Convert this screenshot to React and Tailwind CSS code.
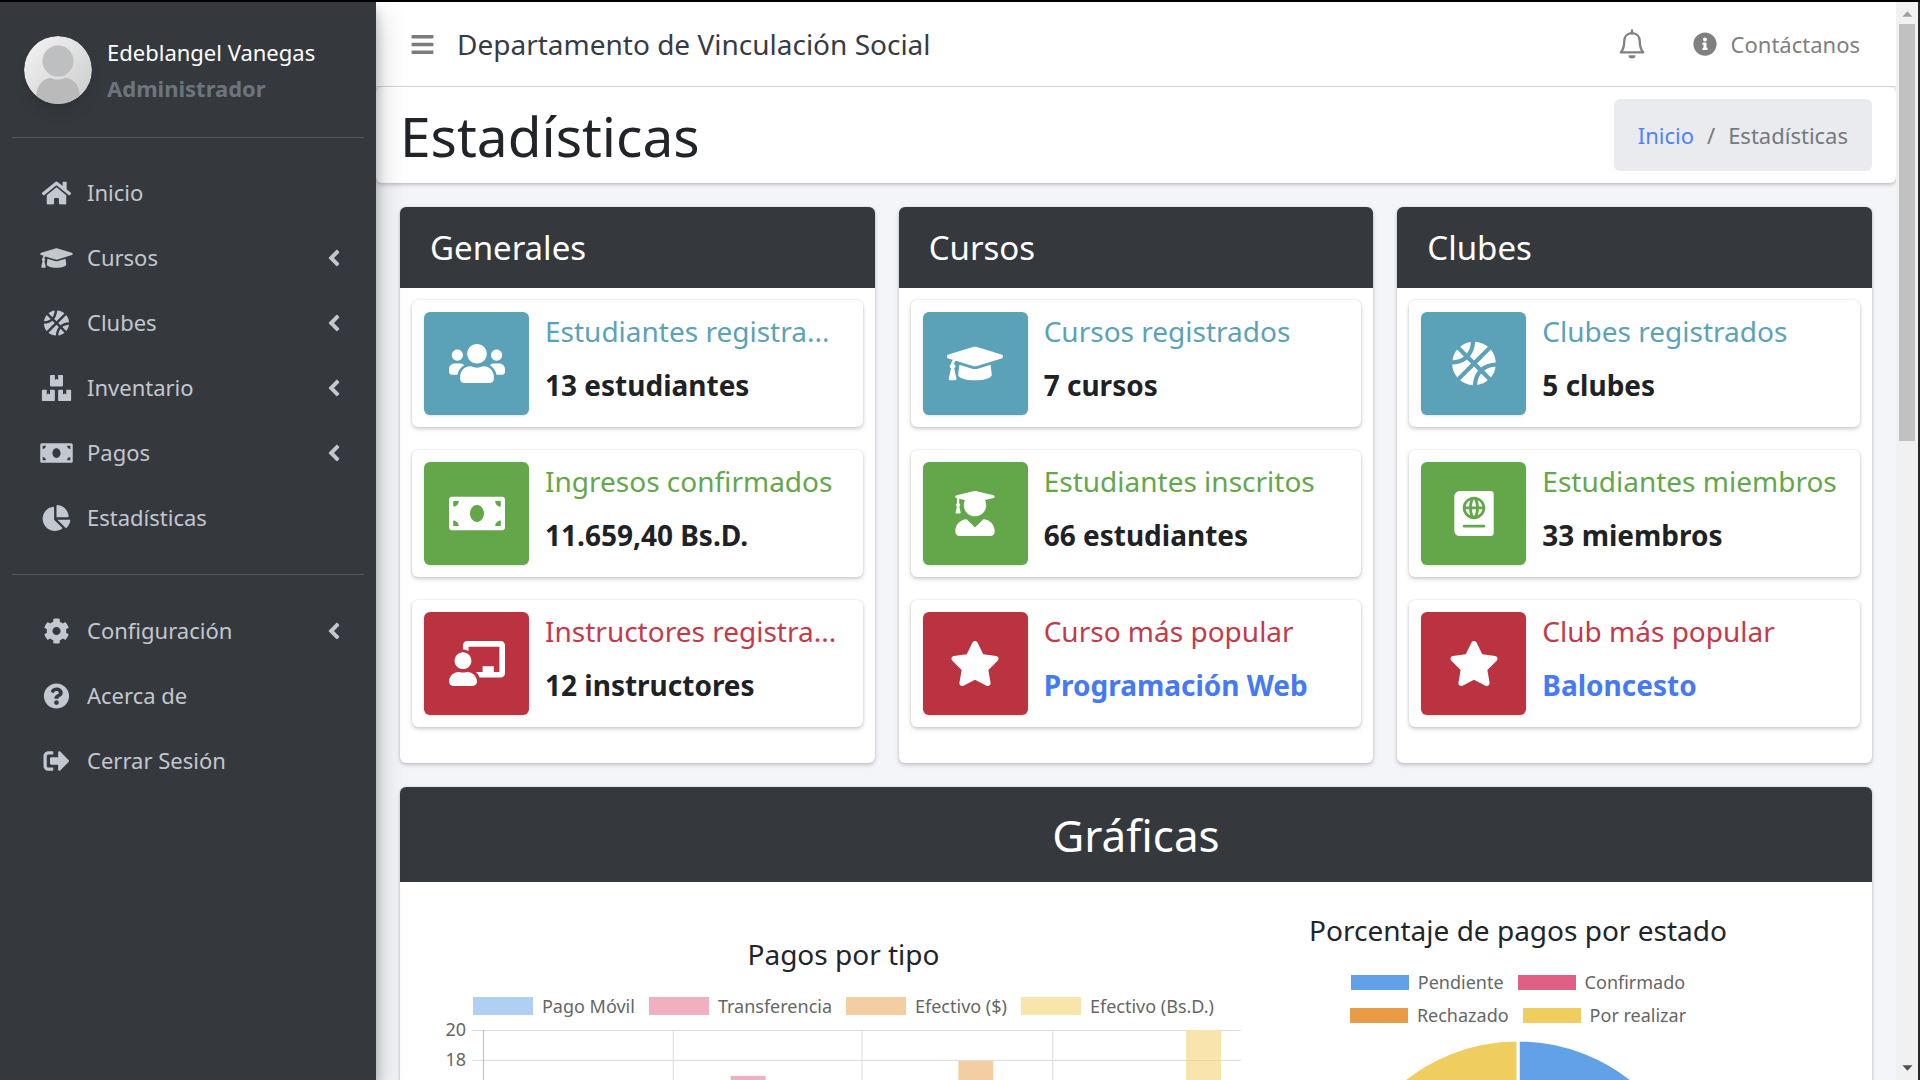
import React from "react";
import {
    FaAngleLeft,
    FaBars,
    FaBasketballBall,
    FaBoxes,
    FaChalkboardTeacher,
    FaChartPie,
    FaCog,
    FaGraduationCap,
    FaHome,
    FaInfoCircle,
    FaMoneyBill,
    FaPassport,
    FaQuestionCircle,
    FaSignOutAlt,
    FaStar,
    FaUserGraduate,
    FaUsers,
} from "react-icons/fa";

const mainLinks = [
    { label: "Inicio", icon: FaHome },
    { label: "Cursos", icon: FaGraduationCap, tree: true },
    { label: "Clubes", icon: FaBasketballBall, tree: true },
    { label: "Inventario", icon: FaBoxes, tree: true },
    { label: "Pagos", icon: FaMoneyBill, tree: true },
    { label: "Estadísticas", icon: FaChartPie },
];

const accountLinks = [
    { label: "Configuración", icon: FaCog, tree: true },
    { label: "Acerca de", icon: FaQuestionCircle },
    { label: "Cerrar Sesión", icon: FaSignOutAlt },
];

const tones = {
    info: { box: "bg-[#5ba2b8]", text: "text-[#5ba2b8]" },
    success: { box: "bg-[#64a74b]", text: "text-[#64a74b]" },
    danger: { box: "bg-[#bb3340]", text: "text-[#c43a4b]" },
};

const groups = [
    {
        title: "Generales",
        items: [
            { tone: "info", icon: FaUsers, label: "Estudiantes registra...", value: "13 estudiantes" },
            { tone: "success", icon: FaMoneyBill, label: "Ingresos confirmados", value: "11.659,40 Bs.D." },
            { tone: "danger", icon: FaChalkboardTeacher, label: "Instructores registra...", value: "12 instructores" },
        ],
    },
    {
        title: "Cursos",
        items: [
            { tone: "info", icon: FaGraduationCap, label: "Cursos registrados", value: "7 cursos" },
            { tone: "success", icon: FaUserGraduate, label: "Estudiantes inscritos", value: "66 estudiantes" },
            { tone: "danger", icon: FaStar, label: "Curso más popular", value: "Programación Web", link: true },
        ],
    },
    {
        title: "Clubes",
        items: [
            { tone: "info", icon: FaBasketballBall, label: "Clubes registrados", value: "5 clubes" },
            { tone: "success", icon: FaPassport, label: "Estudiantes miembros", value: "33 miembros" },
            { tone: "danger", icon: FaStar, label: "Club más popular", value: "Baloncesto", link: true },
        ],
    },
];

const typeLegend = [
    { label: "Pago Móvil", color: "bg-[#afd0f4]" },
    { label: "Transferencia", color: "bg-[#efb0c0]" },
    { label: "Efectivo ($)", color: "bg-[#f3cea3]" },
    { label: "Efectivo (Bs.D.)", color: "bg-[#f8e5ac]" },
];

const statusLegend = [
    [
        { label: "Pendiente", color: "bg-[#62a1e8]" },
        { label: "Confirmado", color: "bg-[#e06085]" },
    ],
    [
        { label: "Rechazado", color: "bg-[#e79c45]" },
        { label: "Por realizar", color: "bg-[#f0cd5f]" },
    ],
];

const NavList = ({ links }) => (
    <ul className="px-3 flex flex-col">
        {links.map(({ label, icon: Icon, tree }) => (
            <li key={label}>
                <a href="#" className="flex items-center h-[65px] pl-6 pr-[17px] text-[#c2c7d0]">
                    <span className="w-10 flex justify-center">
                        <Icon className="w-[33px] h-[26px]" />
                    </span>
                    <span className="ml-[11px] flex-1">{label}</span>
                    {tree && <FaAngleLeft size={26} />}
                </a>
            </li>
        ))}
    </ul>
);

const Avatar = () => (
    <svg viewBox="0 0 68 68" className="w-[68px] h-[68px] rounded-full shadow-lg shrink-0" aria-hidden="true">
        <defs>
            <linearGradient id="avatarBack" x1="0" y1="0" x2="1" y2="1">
                <stop offset="0" stopColor="#f4f4f4" />
                <stop offset="1" stopColor="#cbcbcb" />
            </linearGradient>
            <clipPath id="avatarClip">
                <circle cx="34" cy="34" r="34" />
            </clipPath>
        </defs>
        <g clipPath="url(#avatarClip)">
            <rect width="68" height="68" fill="url(#avatarBack)" />
            <path d="M12 60c1-12 8-18 15-18 4 2 10 2 14 0 8 0 14 6 15 18v8H12z" fill="#bababa" />
            <circle cx="34" cy="25" r="15.500" fill="#bdbfc0" />
        </g>
    </svg>
);

const BellIcon = () => (
    <svg viewBox="0 0 26 30" className="w-[26px] h-[30px]" fill="none" stroke="currentColor" strokeWidth="2.300" strokeLinejoin="round" aria-hidden="true">
        <path d="M13 4.200c-5 0-7.800 3.600-7.800 8.300 0 6-1.200 8.500-3.400 10.800h22.400c-2.200-2.300-3.400-4.800-3.400-10.800 0-4.700-2.800-8.300-7.800-8.300z" />
        <path d="M13 1.500v3" strokeLinecap="round" />
        <path d="M9.500 26.300h7a3.500 3.200 0 0 1-7 0z" fill="currentColor" stroke="none" />
    </svg>
);

const Sidebar = () => (
    <aside className="relative z-10 w-[376px] shrink-0 bg-[#35393e] shadow-[0_14px_28px_rgba(0,0,0,0.25),0_10px_10px_rgba(0,0,0,0.22)]">
        <div className="mx-3 pt-8 pb-[31px] border-b border-[#4f5962] flex items-center gap-[15px] pl-3">
            <Avatar />
            <div className="leading-9">
                <a href="#" className="block text-white">Edeblangel Vanegas</a>
                <span className="block font-bold text-[#6c757d]">Administrador</span>
            </div>
        </div>
        <nav className="pt-[22px]">
            <NavList links={mainLinks} />
            <hr className="mx-3 mt-6 mb-[23px] border-[#4f5962]" />
            <NavList links={accountLinks} />
        </nav>
    </aside>
);

const InfoBox = ({ tone, icon: Icon, label, value, link }) => (
    <div className="flex h-[127px] p-3 bg-white rounded-md shadow-[0_0_2px_rgba(0,0,0,0.13),0_2px_4px_rgba(0,0,0,0.2)]">
        <div className={`w-[105px] shrink-0 flex items-center justify-center rounded-md text-white shadow ${tones[tone].box}`}>
            <Icon className="w-14 h-[45px]" />
        </div>
        <div className="min-w-0 flex-1 pl-4 text-[28px] leading-[54px] -mt-2">
            <p className={`truncate ${tones[tone].text}`}>{label}</p>
            {link ? (
                <a href="#" className="font-bold text-[#4579f5]">{value}</a>
            ) : (
                <p className="font-bold text-[#1f2225]">{value}</p>
            )}
        </div>
    </div>
);

const GroupCard = ({ title, items }) => (
    <section className="flex-1 min-w-0 bg-white rounded-md shadow-[0_0_2px_rgba(0,0,0,0.13),0_2px_4px_rgba(0,0,0,0.2)]">
        <h2 className="h-[81px] pl-[30px] flex items-center rounded-t-md bg-[#35393e] text-white text-[33px]">{title}</h2>
        <div className="p-3 pb-9 flex flex-col gap-[23px]">
            {items.map((item) => (
                <InfoBox key={item.label} {...item} />
            ))}
        </div>
    </section>
);

const LegendItem = ({ label, color, swatch }) => (
    <li className="flex items-center gap-[9px]">
        <span className={`${swatch} ${color}`} />
        {label}
    </li>
);

const BarChart = () => (
    <svg viewBox="0 0 800 300" className="block w-full" aria-hidden="true">
        <g stroke="#dcdcdc" strokeWidth="1">
            {[10, 40, 70, 100, 130].map((y) => (
                <path key={y} d={`M28 ${y}.5H798`} />
            ))}
            {[229, 418, 609].map((x) => (
                <path key={x} d={`M${x}.5 10V300`} />
            ))}
        </g>
        <path d="M39.5 10V300" stroke="#bdbdbd" />
        <rect x="287" y="56" width="35" height="244" fill="#efb0c0" />
        <rect x="515" y="41" width="35" height="259" fill="#f3cea3" />
        <rect x="743" y="10" width="35" height="290" fill="#f8e5ac" />
        <path d="M743 40.5H778" stroke="#e9d69e" />
        <g fill="#666" fontSize="18" textAnchor="end">
            <text x="22" y="16">20</text>
            <text x="22" y="46">18</text>
        </g>
    </svg>
);

const PieChart = () => (
    <svg viewBox="0 0 368 368" className="w-[368px]" aria-hidden="true">
        <g stroke="#fff" strokeWidth="3">
            <path d="M184 184V1A183 183 0 0 1 184 367Z" fill="#62a1e8" />
            <path d="M184 184V367A183 183 0 0 1 1 184Z" fill="#e79c45" />
            <path d="M184 184H1A183 183 0 0 1 184 1Z" fill="#f0cd5f" />
        </g>
    </svg>
);

const Scrollbar = () => (
    <div className="w-6 shrink-0 bg-[#f1f1f1] border-r-2 border-[#26282b] flex flex-col items-center justify-between" aria-hidden="true">
        <div className="flex flex-col items-center">
            <svg viewBox="0 0 16 24" className="w-4 h-[22px]">
                <path d="M3 16h11l-5.500-6z" fill="#a0a0a0" />
            </svg>
            <div className="w-4 h-[417px] bg-[#c1c1c1]" />
        </div>
        <svg viewBox="0 0 16 24" className="w-4 h-[22px]">
            <path d="M3 8h11l-5.500 6z" fill="#505050" />
        </svg>
    </div>
);

const App = () => (
    <div className="h-screen overflow-hidden flex border-t-2 border-black bg-[#f3f5f9] font-['Noto_Sans',sans-serif] text-[22px] text-[#212529]">
        <Sidebar />
        <div className="flex-1 min-w-0 flex flex-col">
            <header className="h-[85px] shrink-0 bg-white border-b border-[#dee2e6] flex items-center pl-[34px] pr-9">
                <button type="button" aria-label="Menú" className="text-[#7b7b7b]">
                    <FaBars size={25} />
                </button>
                <span className="ml-[22px] text-[28px] text-[#363b45]">Departamento de Vinculación Social</span>
                <div className="ml-auto flex items-center gap-12 text-[#808080]">
                    <button type="button" aria-label="Notificaciones">
                        <BellIcon />
                    </button>
                    <a href="#" className="flex items-center gap-[14px]">
                        <FaInfoCircle size={24} />
                        Contáctanos
                    </a>
                </div>
            </header>
            <div className="h-24 shrink-0 bg-white rounded-md flex items-center justify-between pl-6 pr-6 shadow-[0_0_2px_rgba(0,0,0,0.13),0_2px_4px_rgba(0,0,0,0.2)]">
                <h1 className="text-[55px] leading-none">Estadísticas</h1>
                <nav className="h-[72px] px-6 flex items-center gap-[13px] rounded-md bg-[#e9ebee] text-[#74797e]">
                    <a href="#" className="text-[#4e83f6]">Inicio</a>
                    <span>/</span>
                    <span>Estadísticas</span>
                </nav>
            </div>
            <main className="pt-6 px-6 flex flex-col gap-6">
                <div className="flex gap-6">
                    {groups.map((group) => (
                        <GroupCard key={group.title} {...group} />
                    ))}
                </div>
                <section className="bg-white rounded-md shadow-[0_0_2px_rgba(0,0,0,0.13),0_2px_4px_rgba(0,0,0,0.2)]">
                    <h2 className="h-[95px] flex items-center justify-center rounded-t-md bg-[#35393e] text-white text-[44px]">Gráficas</h2>
                    <div className="flex pr-[119px]">
                        <div className="flex-1 min-w-0 pl-11 pr-10 pt-[52px]">
                            <h3 className="text-[28px] leading-[40px] text-center">Pagos por tipo</h3>
                            <ul className="mt-5 mb-0.5 flex justify-center gap-[14px] text-[18px] leading-6 text-[#666] whitespace-nowrap">
                                {typeLegend.map((item) => (
                                    <LegendItem key={item.label} {...item} swatch="w-[60px] h-[18px]" />
                                ))}
                            </ul>
                            <BarChart />
                        </div>
                        <div className="w-[470px] shrink-0 pt-7 flex flex-col items-center">
                            <h3 className="text-[28px] leading-[40px] whitespace-nowrap">Porcentaje de pagos por estado</h3>
                            <div className="mt-5 mb-3 flex flex-col gap-[9px] text-[18px] leading-6 text-[#666]">
                                {statusLegend.map((row) => (
                                    <ul key={row[0].label} className="flex justify-center gap-[14px]">
                                        {row.map((item) => (
                                            <LegendItem key={item.label} {...item} swatch="w-[58px] h-[15px]" />
                                        ))}
                                    </ul>
                                ))}
                            </div>
                            <PieChart />
                        </div>
                    </div>
                </section>
            </main>
        </div>
        <Scrollbar />
    </div>
);

export default App;
